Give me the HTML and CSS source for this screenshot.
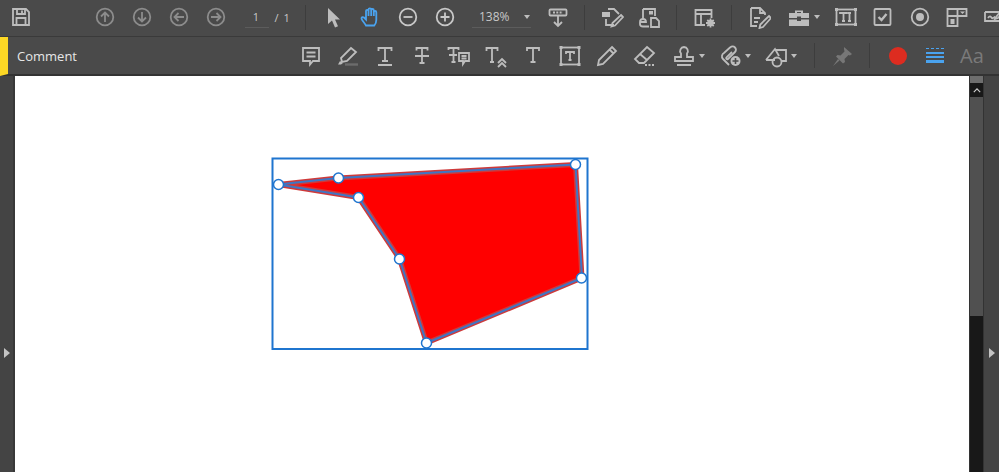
FILE: index.html
```html
<!DOCTYPE html>
<html lang="en">
<head>
<meta charset="utf-8">
<title>Comment</title>
<link rel="stylesheet" href="styles.css">
</head>
<body>
<div class="app">
  <div class="bar bar-main">
    <div class="cell first"><svg class="ic" viewBox="0 0 24 24"><path d="M4 4h13l3 3v13H4z"/><path d="M8 4v5h8V4M13 5.500v2.500M7.500 20v-7h9v7"/></svg></div>
    <div class="group nav">
      <div class="cell dim"><svg class="ic" viewBox="0 0 24 24"><circle cx="12" cy="12" r="8.300"/><path d="M12 17V7.500M8 11.500l4-4 4 4"/></svg></div>
      <div class="cell dim"><svg class="ic" viewBox="0 0 24 24"><circle cx="12" cy="12" r="8.300"/><path d="M12 7v9.500M8 12.500l4 4 4-4"/></svg></div>
      <div class="cell dim"><svg class="ic" viewBox="0 0 24 24"><circle cx="12" cy="12" r="8.300"/><path d="M17 12H7.500M11.500 8l-4 4 4 4"/></svg></div>
      <div class="cell dim"><svg class="ic" viewBox="0 0 24 24"><circle cx="12" cy="12" r="8.300"/><path d="M7 12h9.500M12.500 8l4 4-4 4"/></svg></div>
    </div>
    <div class="pager"><span class="field page-no">1</span><span class="of">/ 1</span></div>
    <div class="sep s1"></div>
    <div class="cell"><svg class="ic" viewBox="0 0 24 24"><path class="solid" d="M6 3v16l4-3.500 3 7 3-1.200-3-6.800h5z"/></svg></div>
    <div class="cell active"><svg class="ic hand" viewBox="0 0 24 24"><path d="M7 20.500c-1-2-4.500-5.500-4.500-7 0-1.300 1.500-1.800 2.500-1l2 2V6c0-1.600 2.500-1.600 2.500 0v5V4.500c0-1.600 2.700-1.600 2.700 0V11 5.200c0-1.600 2.600-1.600 2.600 0V11 7.200c0-1.600 2.500-1.600 2.500 0V15c0 2.500-1 4.300-2 5.500z"/></svg></div>
    <div class="cell bright"><svg class="ic" viewBox="0 0 24 24"><circle cx="12" cy="12" r="8.300"/><path d="M7.500 12h9"/></svg></div>
    <div class="cell bright"><svg class="ic" viewBox="0 0 24 24"><circle cx="12" cy="12" r="8.300"/><path d="M7.500 12h9M12 7.500v9"/></svg></div>
    <div class="field zoom"><span>138%</span><i class="caret"></i></div>
    <div class="cell"><svg class="ic" viewBox="0 0 24 24"><rect x="3.500" y="4.500" width="17" height="6" rx="1"/><path d="M7 7.500h10" stroke-dasharray="2 1.300"/><path d="M12 11v10M8 17l4 4 4-4"/></svg></div>
    <div class="sep s2"></div>
    <div class="cell"><svg class="ic" viewBox="0 0 24 24"><path class="solid" d="M2 7h8v5H2z"/><path d="M8 4h6l5 5M6 14v6h8M21 10l2 2-8 8.500-3.500 1 1-3.500z"/></svg></div>
    <div class="cell"><svg class="ic" viewBox="0 0 24 24"><path d="M6 4h12v7M6 4v10a3 3 0 0 1 3 3H3a3 3 0 0 1 3-3M3 17v2c0 1.500 1 2.500 3 2.500h6M14 13h5l3 3v6h-8z"/><path class="solid" d="M16 9.500h-4V6h4z"/></svg></div>
    <div class="sep s3"></div>
    <div class="cell"><svg class="ic" viewBox="0 0 24 24"><path d="M13 20H3.500V5h16v8M3.500 9h16M9 9v11"/><circle class="solid" cx="18.500" cy="18" r="3.200"/><circle class="hole" cx="18.500" cy="18" r="1.100"/><path d="M18.500 13.500v9M14 18h9M15.300 14.800l6.400 6.400M21.700 14.800l-6.400 6.400"/></svg></div>
    <div class="sep s4"></div>
    <div class="cell"><svg class="ic" viewBox="0 0 24 24"><path d="M4 3h9l5 5v2M13 3v5h5M10 21H4V3M7 13h6M7 17h4M22 11l2 2-8 9-3.500 1 .8-3.500z"/></svg></div>
    <div class="cell wide"><svg class="ic" viewBox="0 0 24 24"><path class="solid" d="M2 8h20v5h-8v-1.500h-4V13H2zM2 14.500h8V16h4v-1.500h8V21H2zM8 8V5.500h8V8h-2V7h-4v1z"/></svg><i class="caret"></i></div>
    <div class="cell sp"><svg class="ic" viewBox="0 0 24 24"><rect x="2.500" y="4.500" width="19" height="15"/><path class="solid" d="M1 3h3v3H1zM20 3h3v3h-3zM1 18h3v3H1zM20 18h3v3h-3z"/><path d="M6 9V8h7v1M9.500 8v8M8 16h3M15.500 8v8M14 8h3M14 16h3"/></svg></div>
    <div class="cell"><svg class="ic" viewBox="0 0 24 24"><rect x="3.500" y="4" width="16" height="16" rx="1"/><path class="thick" d="M7.500 12l3 3 5-6"/></svg></div>
    <div class="cell"><svg class="ic" viewBox="0 0 24 24"><circle cx="12" cy="12" r="8.300"/><circle class="solid" cx="12" cy="12" r="4"/></svg></div>
    <div class="cell"><svg class="ic" viewBox="0 0 24 24"><path d="M2.500 4h19v7h-9v10H2.500zM2.500 11h10M12.500 4v7"/><path class="solid" d="M15 6.500h5l-2.500 2.500zM5.500 14h4v5h-4z"/></svg></div>
    <div class="cell"><svg class="ic" viewBox="0 0 24 24"><path d="M3 7h14M3 7v9h18v-6M6 13c2-3 3-1 4 0s2-1 3-1M14 12l6-7 2 2-6 6-3 1z"/></svg></div>
  </div>
  <div class="bar bar-tools">
    <div class="tool-title">Comment</div>
    <div class="cell"><svg class="ic" viewBox="0 0 24 24"><path d="M4 4h16v13h-6l-3 3.500V17H4z"/><path d="M7.500 8.500h9M7.500 12.500h9"/></svg></div>
    <div class="cell"><svg class="ic" viewBox="0 0 24 24"><path d="M15 4l5 4-9 9-5 1-1-4z"/><path class="solid" d="M4 17l3 2-2 1.500H2z"/><path class="mark" d="M9 20.500h13"/></svg></div>
    <div class="cell"><svg class="ic" viewBox="0 0 24 24"><path d="M5.500 7V4h13v3M12 4v13M9 17h6M5 21h14"/></svg></div>
    <div class="cell"><svg class="ic" viewBox="0 0 24 24"><path d="M6.500 6.500V4h11v2.500M12 4v15M9.500 19h5M5 12h14"/></svg></div>
    <div class="cell"><svg class="ic" viewBox="0 0 24 24"><path d="M1.500 6V4h10v2M6.500 4v14M4.500 18h4M2 11h8M12 9h10v8h-4l-2 3v-3h-4z"/><path d="M14.500 12h5M14.500 14.500h5"/></svg></div>
    <div class="cell"><svg class="ic" viewBox="0 0 24 24"><path d="M2.500 7V4h11v3M8 4v14M6 18h4M14 19l4-4 4 4M14 23l4-4 4 4"/></svg></div>
    <div class="cell"><svg class="ic" viewBox="0 0 24 24"><path d="M6 7V4h12v3M12 4v14M9.500 18h5"/></svg></div>
    <div class="cell"><svg class="ic" viewBox="0 0 24 24"><rect x="3" y="3.500" width="18" height="17"/><path class="solid" d="M1.500 2h3v3h-3zM19.500 2h3v3h-3zM1.500 19h3v3h-3zM19.500 19h3v3h-3z"/><path d="M8 10V8h8v2M12 8v8M10.500 16h3"/></svg></div>
    <div class="cell"><svg class="ic" viewBox="0 0 24 24"><path d="M17 3l4 4L8 20l-5 1 1-5zM14.500 5.500l4 4"/></svg></div>
    <div class="cell"><svg class="ic" viewBox="0 0 24 24"><path d="M15 3l7 6-10 10H7l-4-4zM8 10l7 6"/><path d="M13 21h9" stroke-dasharray="2 1.500"/></svg></div>
    <div class="cell wide"><svg class="ic" viewBox="0 0 24 24"><path d="M12 3a4 4 0 0 1 3 6.500V13h6v4H3v-4h6V9.500A4 4 0 0 1 12 3zM5 21h14"/></svg><i class="caret"></i></div>
    <div class="cell wide"><svg class="ic" viewBox="0 0 24 24"><path d="M11 21l-6-6c-2-2-1-5 1-6l6-5.500c2-1.500 4-1 5 0s1.500 3 0 4.500l-7 7c-1 .8-2.500-.8-1.500-1.700L14 8"/><circle class="solid" cx="17.500" cy="17" r="5"/><path class="cut" d="M17.500 14v6M14.500 17h6"/></svg><i class="caret"></i></div>
    <div class="cell wide"><svg class="ic" viewBox="0 0 24 24"><path d="M2 16L11 5l4 7M11 16H2M12 6h10v11h-4"/><circle cx="13" cy="18" r="4.500"/></svg><i class="caret"></i></div>
    <div class="sep s5"></div>
    <div class="cell dark"><svg class="ic" viewBox="0 0 24 24"><path class="solid" d="M14 3l8 7-2 1.500-1.500-.5-4 4 .5 3-2 1.500-7-7 1.500-1.500 3 .5 4-4-.5-2.500zM8 15l1.500 1.500L3 22z"/></svg></div>
    <div class="sep s6"></div>
    <div class="cell"><div class="dot"></div></div>
    <div class="cell"><div class="line-style"><i class="ls-dash"></i><i class="ls-thin"></i><i class="ls-thin"></i><i class="ls-thick"></i></div></div>
    <div class="cell aa">Aa</div>
  </div>
  <div class="work">
    <div class="rail rail-left"><i class="rail-arrow"></i></div>
    <div class="page">
      <svg class="sheet" viewBox="15 76 954 396">
        <rect class="box" x="272.500" y="158.500" width="315" height="190.500"/>
        <path class="shape" d="M278 184.500L338 178 575.500 164.500 582 278 426.500 343 399.500 259 358.500 197.500z"/>
        <path class="edge" d="M278 184.500L338 178 575.500 164.500 582 278 426.500 343 399.500 259 358.500 197.500z"/>
        <circle class="handle" cx="278.500" cy="184.500" r="5"/>
        <circle class="handle" cx="338.500" cy="178" r="5"/>
        <circle class="handle" cx="575.500" cy="164.500" r="5"/>
        <circle class="handle" cx="581.500" cy="278" r="5"/>
        <circle class="handle" cx="426.500" cy="343" r="5"/>
        <circle class="handle" cx="399.500" cy="259" r="5"/>
        <circle class="handle" cx="358.500" cy="197.500" r="5"/>
      </svg>
    </div>
    <div class="scroll">
      <div class="scroll-cap"></div>
      <div class="scroll-btn"><svg viewBox="0 0 10 6" class="chev"><path d="M1 5l4-4 4 4"/></svg></div>
      <div class="scroll-thumb"></div>
      <div class="scroll-track"></div>
    </div>
    <div class="rail rail-right"><i class="rail-arrow"></i></div>
  </div>
</div>
</body>
</html>
```

FILE: styles.css
```css
* { box-sizing: border-box; }
html, body { margin: 0; height: 100%; overflow: hidden; background: #444; }
.app { display: flex; flex-direction: column; height: 472px; width: 999px; font-family: "Open Sans", "Liberation Sans", sans-serif; }

.bar { display: flex; align-items: center; background: #4a4a4a; color: #bdbdbd; flex: none; overflow: hidden; }
.bar-main { height: 37px; padding-left: 2.5px; padding-bottom: 2px; border-bottom: 1px solid #3a3a3a; }
.bar-tools { height: 39px; border-left: 8px solid #fdd825; border-bottom: 2px solid #333; }
.group { display: flex; flex: none; }
.nav { margin-left: 47px; }

.cell { width: 37px; height: 34px; flex: none; display: flex; align-items: center; justify-content: center; color: #bdbdbd; }
.cell.dim { color: #8c8c8c; }
.cell.bright { color: #c8c8c8; }
.cell.active { color: #4aa3ef; }
.cell.dark { color: #777; }
.cell.sp { margin-left: 4px; }
.cell.wide { width: 46px; justify-content: flex-start; padding-left: 9px; gap: 3px; }

.ic { width: 24px; height: 24px; flex: none; fill: none; stroke: currentColor; stroke-width: 1.8; }
.ic .solid { fill: currentColor; stroke: none; }
.ic .hole { fill: #4a4a4a; stroke: none; }
.ic .thick { stroke-width: 2.4; }
.ic .mark { stroke: #6c6c6c; stroke-width: 2.400; }
.ic .cut { stroke: #4a4a4a; stroke-width: 1.600; }
.hand { stroke-width: 1.800; }

.caret { width: 0; height: 0; flex: none; border-left: 3.500px solid transparent; border-right: 3.500px solid transparent; border-top: 4px solid #bdbdbd; }

.pager { display: flex; flex: none; align-items: center; margin-left: 10px; font-size: 11px; color: #c8c8c8; white-space: nowrap; }
.field { flex: none; border-bottom: 1px solid #5c5c5c; height: 22px; display: flex; align-items: center; font-size: 12px; color: #c8c8c8; }
.page-no { width: 24px; font-size: 11px; padding-right: 1px; justify-content: center; }
.of { margin-left: 6px; width: 14px; word-spacing: 2px; }
.sep { width: 1px; height: 25px; flex: none; background: #3d3d3d; }
.s1 { margin-left: 16px; margin-right: 10px; }
.s2 { margin-left: 7.500px; margin-right: 9px; }
.s3 { margin-left: 8px; margin-right: 9px; }
.s4 { margin-left: 8px; margin-right: 9px; }
.s5 { margin-left: 13px; margin-right: 9px; }
.s6 { margin-left: 8px; margin-right: 10px; }
.zoom { width: 59px; margin-left: 8.500px; margin-right: 8px; gap: 14px; padding-left: 7px; }

.tool-title { width: 284.500px; padding-left: 9px; font-size: 13px; font-weight: 400; color: #e6e6e6; flex: none; }
.dot { width: 18px; height: 18px; border-radius: 50%; background: #dd2c20; }
.line-style { display: flex; flex-direction: column; width: 18px; gap: 2px; }
.line-style i { display: block; }
.ls-dash { height: 1px; margin-bottom: 1px; border-top: 1px dashed #4aa3ef; }
.ls-thin { height: 2px; background: #4aa3ef; }
.ls-thick { height: 3px; background: #4aa3ef; }
.aa { font-size: 20px; color: #7a7a7a; }

.work { flex: 1; min-height: 0; display: flex; }
.rail { flex: none; display: flex; align-items: center; background: #444; padding-top: 157px; }
.rail-left { width: 15px; padding-left: 4px; border-right: 2px solid #383838; }
.rail-right { width: 16px; padding-left: 5px; border-left: 1px solid #333; }
.rail-arrow { width: 0; height: 0; border-left: 6px solid #c4c4c4; border-top: 5px solid transparent; border-bottom: 5px solid transparent; }
.page { flex: 1; min-width: 0; background: #fff; }
.sheet { display: block; width: 954px; height: 396px; }
.box { fill: none; stroke: #1f75cf; stroke-width: 2; }
.shape { fill: #f00; stroke: #cf3a3a; stroke-width: 5; stroke-linejoin: round; }
.edge { fill: none; stroke: #3f76c4; stroke-width: 2; stroke-linejoin: round; }
.handle { fill: #fff; stroke: #1f75cf; stroke-width: 1.500; }

.scroll { width: 14px; flex: none; display: flex; flex-direction: column; background: #181818; border-left: 1px solid #333; }
.scroll-cap { height: 7px; background: #6e6e6e; }
.scroll-btn { height: 14px; background: #181818; display: flex; align-items: center; justify-content: center; }
.chev { width: 8px; height: 5px; fill: none; stroke: #cfcfcf; stroke-width: 1.400; }
.scroll-thumb { height: 219px; background: #505050; }
.scroll-track { flex: 1; background: #181818; }
```
